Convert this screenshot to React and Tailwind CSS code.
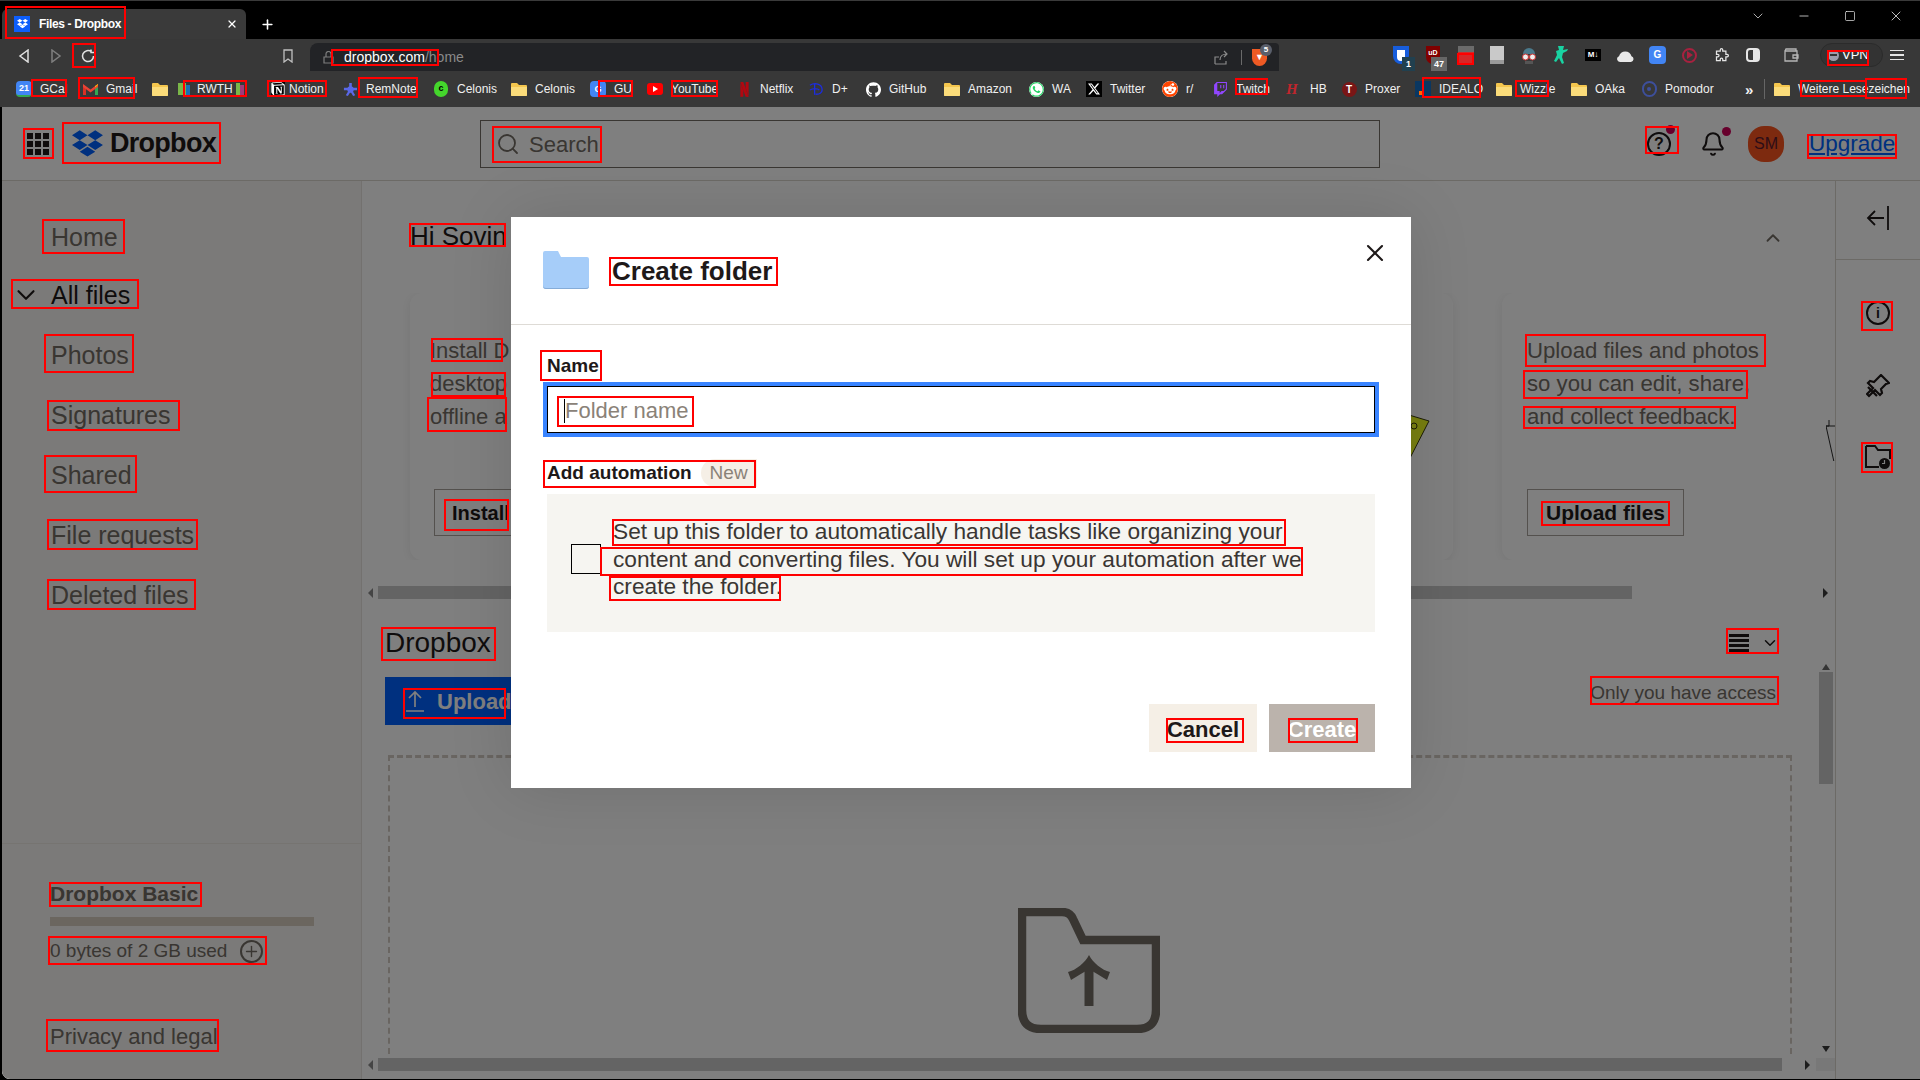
import React from 'react';
import { Bell, ChevronDown, ChevronUp, Minus, Plus, Search, Square, X } from 'lucide-react';
import { SiGithub, SiNetflix, SiNotion, SiReddit, SiTwitch, SiWhatsapp, SiX } from 'react-icons/si';

// Small favicons that no icon set has in the right shape
const Folder = () => (
  <svg width="16" height="14" viewBox="0 0 16 14">
    <path d="M0 2a1 1 0 0 1 1-1h5l2 2h7a1 1 0 0 1 1 1v9a1 1 0 0 1-1 1H1a1 1 0 0 1-1-1z" fill="#f4c64e" />
    <path d="M0 5h16v8a1 1 0 0 1-1 1H1a1 1 0 0 1-1-1z" fill="#fbdc7a" />
  </svg>
);

const DropboxGlyph = ({ size = 34, color = '#0061fe' }) => (
  <svg width={size} height={size * 0.85} viewBox="0 0 235 200" fill={color}>
    <path d="M58.86 75l58.87-37.5L58.86 0 0 37.5z M176.59 75l58.86-37.5L176.59 0l-58.86 37.5z M117.73 112.5L58.86 75 0 112.5 58.86 150z M176.59 150l58.86-37.5L176.59 75l-58.86 37.5z M58.86 162.5l58.87 37.5 58.86-37.5-58.86-37.5z" />
  </svg>
);

const Box = ({ cls, children }) => (
  <div className={`w-4 h-4 flex items-center justify-center text-[9px] font-bold leading-none ${cls}`}>{children}</div>
);

const bookmarks = [
  { w: 'w-[66px]', label: 'GCal', icon: <Box cls="bg-[#4285f4] text-white rounded-sm border-b-2 border-[#34a853]">21</Box> },
  {
    w: 'w-[70px]',
    label: 'Gmail',
    icon: (
      <svg width="15" height="12" viewBox="0 0 15 12">
        <path d="M0 1.5V12h3V4.5z" fill="#d93025" />
        <path d="M15 1.5V12h-3V4.5z" fill="#34a853" />
        <path d="M0 1l7.5 5.6L15 1v3L7.5 9.5 0 4z" fill="#ea4335" />
        <path d="M12 4.5L15 2v-1l-3 2z" fill="#fbbc04" />
      </svg>
    ),
  },
  { w: 'w-[26px]', label: '', icon: <Folder /> },
  {
    w: 'w-[58px]',
    label: 'RWTH',
    tight: true,
    icon: (
      <div className="flex w-4 h-4 items-center">
        <div className="w-2 h-3 bg-[#7ab648]" />
        <div className="w-1 h-3 mt-1 bg-[#1a6fb5]" />
      </div>
    ),
  },
  {
    w: 'w-[34px]',
    label: '',
    icon: (
      <div className="flex w-4 h-4 items-center">
        <div className="w-1 h-3 bg-[#7ab648]" />
        <div className="w-1 h-3 mt-1 bg-[#a03a7a]" />
      </div>
    ),
  },
  { w: 'w-[72px]', label: 'Notion', tight: true, icon: <SiNotion className="text-white bg-black" size={14} /> },
  {
    w: 'w-[91px]',
    label: 'RemNote',
    icon: (
      <svg width="15" height="15" viewBox="0 0 16 16" fill="#5a68e8">
        <circle cx="8" cy="8" r="3.4" />
        <path d="M6.6 1h2.8v5H6.6zM1 6h5v2.8H1zM10 6h5v2.8h-5zM3 14l3-5 2 1.5L5.2 15zM13 14l-3-5-2 1.5 2.800 4.500z" />
      </svg>
    ),
  },
  {
    w: 'w-[78px]',
    label: 'Celonis',
    icon: (
      <div className="w-[14px] h-4 rounded-full bg-[#44d62c] text-black text-[9px] font-bold flex items-center justify-center">c</div>
    ),
  },
  { w: 'w-[79px]', label: 'Celonis', icon: <Folder /> },
  { w: 'w-[57px]', label: 'GU', icon: <Box cls="bg-[#4285f4] text-white rounded-sm">G</Box> },
  {
    w: 'w-[89px]',
    label: 'YouTube',
    icon: (
      <div className="w-4 h-3 rounded-[3px] bg-[#ff0000] flex items-center justify-center">
        <div className="border-l-[5px] border-l-white border-y-[3px] border-y-transparent" />
      </div>
    ),
  },
  { w: 'w-[72px]', label: 'Netflix', icon: <SiNetflix className="text-[#b20710]" size={15} /> },
  {
    w: 'w-[57px]',
    label: 'D+',
    icon: (
      <svg width="15" height="14" viewBox="0 0 16 14" fill="none" stroke="#1c2ce0" strokeWidth="1.4">
        <path d="M1 3c5-3 13-2 13 5 0 3-3 5-7 4.500M6 1v12M1 8c3-2 8-2 10 0" />
      </svg>
    ),
  },
  { w: 'w-[79px]', label: 'GitHub', icon: <SiGithub className="text-white" size={15} /> },
  { w: 'w-[84px]', label: 'Amazon', icon: <Folder /> },
  { w: 'w-[58px]', label: 'WA', icon: <SiWhatsapp className="text-[#25d366] bg-white rounded-full" size={15} /> },
  {
    w: 'w-[76px]',
    label: 'Twitter',
    icon: (
      <div className="w-4 h-4 bg-black flex items-center justify-center">
        <SiX className="text-white" size={12} />
      </div>
    ),
  },
  { w: 'w-[50px]', label: 'r/', icon: <SiReddit className="text-[#ff4500] bg-white rounded-full" size={16} /> },
  {
    w: 'w-[74px]',
    label: 'Twitch',
    icon: <SiTwitch className="text-[#9146ff]" size={15} />,
  },
  { w: 'w-[55px]', label: 'HB', icon: <div className="w-4 text-[#c0262d] italic text-[15px] leading-4 font-bold [font-family:'Liberation_Serif',serif]">H</div> },
  { w: 'w-[74px]', label: 'Proxer', icon: <div className="w-[15px] h-[15px] rounded-full bg-[#7a1616] text-white text-[10px] font-bold flex items-center justify-center">T</div> },
  {
    w: 'w-[81px]',
    label: 'IDEALO',
    icon: (
      <div className="w-4 h-4 bg-[#0a3761] flex items-end pl-[4px] pb-[2px]">
        <div className="w-[4px] h-[4px] bg-[#ff6600]" />
      </div>
    ),
  },
  { w: 'w-[75px]', label: 'Wizzle', icon: <Folder /> },
  { w: 'w-[70px]', label: 'OAka', icon: <Folder /> },
  {
    w: 'w-[104px]',
    label: 'Pomodor',
    icon: (
      <div className="w-[15px] h-4 rounded-full border-2 border-[#3d4f9c] flex items-center justify-center">
        <div className="w-1 h-1 rounded-full bg-[#3d4f9c]" />
      </div>
    ),
  },
];

const annotations = [
  [5, 6, 126, 39], [72, 43, 96, 68], [331, 49, 439, 66], [31, 79, 67, 97], [78, 77, 135, 99], [183, 80, 247, 97],
  [267, 80, 327, 97], [358, 77, 418, 98], [598, 80, 633, 97], [671, 80, 718, 97], [1235, 78, 1268, 95], [1422, 77, 1481, 98],
  [1515, 80, 1549, 97], [1800, 80, 1867, 97], [1865, 78, 1907, 99], [1827, 50, 1869, 66], [1457, 53, 1474, 65],
  [23, 128, 54, 159], [62, 122, 221, 164], [492, 126, 602, 163], [42, 219, 125, 254], [11, 279, 139, 309], [44, 334, 134, 373],
  [47, 400, 180, 431], [44, 455, 137, 493], [47, 519, 198, 550], [47, 579, 196, 610], [409, 223, 506, 247], [431, 338, 503, 362],
  [431, 372, 506, 397], [427, 397, 507, 432], [444, 499, 509, 531], [1645, 126, 1679, 154], [1807, 134, 1897, 159],
  [1861, 301, 1893, 331], [1861, 442, 1893, 473], [1525, 334, 1766, 367], [1523, 370, 1748, 399], [1523, 406, 1736, 429],
  [1541, 501, 1670, 526], [609, 257, 778, 286], [540, 350, 602, 381], [557, 396, 694, 427], [543, 460, 756, 488],
  [612, 519, 1286, 546], [600, 547, 1303, 576], [609, 576, 781, 601], [1166, 718, 1244, 743], [1288, 718, 1358, 743],
  [381, 627, 496, 661], [403, 688, 506, 719], [49, 882, 202, 907], [48, 936, 267, 965], [46, 1019, 219, 1052],
  [1726, 628, 1779, 654], [1590, 676, 1779, 705],
];

const ExtensionIcons = () => (
  <div className="absolute left-[1393px] top-0 h-8 flex items-center">
    <div className="relative w-[33px]">
      <div className="w-4 h-[18px] bg-[#175ddc] rounded-b-lg flex items-center justify-center">
        <div className="w-2 h-[11px] bg-white rounded-b" />
      </div>
      <div className="absolute left-[9px] top-[11px] w-[13px] h-[14px] bg-[#21404f] text-white text-[9px] font-bold text-center leading-[14px]">1</div>
    </div>
    <div className="relative w-[32px]">
      <div className="w-[14px] h-[18px] bg-[#800000] rounded-b-lg text-white text-[7px] font-bold text-center leading-[14px]">uD</div>
      <div className="absolute left-[5px] top-[11px] w-[16px] h-[14px] bg-[#666] text-white text-[9px] font-bold text-center leading-[14px]">47</div>
    </div>
    <div className="w-[32px]">
      <div className="w-4 h-[18px] bg-[#6b6b6b] flex items-end">
        <div className="w-4 h-[12px] bg-[#d62828]" />
      </div>
    </div>
    <div className="w-[31px]">
      <div className="w-[14px] h-[18px] bg-[#c9c9c9] border-b-4 border-[#9a9a9a]" />
    </div>
    <div className="w-[32px]">
      <svg width="16" height="18" viewBox="0 0 16 18">
        <path d="M2 8a6 6 0 0 1 12 0z" fill="#4a7a8c" />
        <circle cx="4.500" cy="11" r="3" fill="#eee" stroke="#c33" />
        <circle cx="11.500" cy="11" r="3" fill="#eee" stroke="#c33" />
        <path d="M4 15h8v3H4z" fill="#555" />
      </svg>
    </div>
    <div className="w-[32px]">
      <svg width="15" height="18" viewBox="0 0 15 18" fill="#19d3a2">
        <path d="M5 0h6l-1 4 5-1-1 2-4 2-1 4 2 6-2 1-3-6-3 4-2-1 3-6-1-4 3-1z" />
      </svg>
    </div>
    <div className="w-[32px]">
      <div className="w-4 h-3 bg-black text-white text-[8px] font-bold text-center leading-3">M↓</div>
    </div>
    <div className="w-[32px]">
      <svg width="17" height="13" viewBox="0 0 17 13" fill="#e8e8e8">
        <path d="M3 13a3 3 0 0 1-1-5.800 6.500 6.500 0 0 1 12.500 0A3 3 0 0 1 14 13z" />
      </svg>
    </div>
    <div className="w-[33px]">
      <div className="w-[17px] h-[18px] bg-[#4285f4] text-white text-[10px] font-bold text-center leading-[18px] rounded-sm">G</div>
    </div>
    <div className="w-[32px]">
      <div className="w-[15px] h-[15px] rounded-full border-2 border-[#a8213f] flex items-center justify-center">
        <div className="border-l-[6px] border-l-[#a8213f] border-y-[4px] border-y-transparent" />
      </div>
    </div>
    <div className="w-[32px]">
      <svg width="15" height="15" viewBox="0 0 24 24" fill="none" stroke="#e6e6e6" strokeWidth="2">
        <path d="M10 3a2 2 0 0 1 4 0v2h5v5h2a2 2 0 0 1 0 4h-2v6h-5v-2a2 2 0 0 0-4 0v2H4v-6h2a2 2 0 0 0 0-4H4V5h6z" />
      </svg>
    </div>
    <div className="w-[38px]">
      <div className="w-[14px] h-[14px] border-2 border-[#e6e6e6] rounded-sm flex justify-end">
        <div className="w-[5px] bg-[#e6e6e6]" />
      </div>
    </div>
    <div className="w-[36px]">
      <svg width="15" height="14" viewBox="0 0 15 14" fill="none" stroke="#b5b5b5" strokeWidth="1.300">
        <path d="M1 3h12v10H1zM1 3l1-2h10v2M9 7h5v3H9z" />
      </svg>
    </div>
    <div className="w-[63px] h-6 rounded-full border border-[#2b2b2b] bg-[#333] flex items-center pl-[7px] gap-[3px] text-white text-[13px]">
      <div className="w-[11px] h-[11px] rounded-full bg-[#9c9caa] flex items-center justify-center">
        <div className="w-[7px] h-[2px] bg-[#333]" />
      </div>
      VPN
    </div>
    <div className="ml-[7px] w-[14px] flex flex-col gap-[3px]">
      <div className="h-[1.500px] bg-[#e6e6e6]" />
      <div className="h-[1.500px] bg-[#e6e6e6]" />
      <div className="h-[1.500px] bg-[#e6e6e6]" />
    </div>
  </div>
);

// Browser chrome: tab strip, address bar, bookmarks
const BrowserChrome = () => (
  <>
    <div className="h-[39px] flex-none flex items-end bg-black border-t border-[#3a3a3a] pl-[2px] relative">
      <div className="w-[244px] h-[30px] bg-[#3a3a3a] rounded-t-md flex items-center pl-[12px] pr-[8px] text-white">
        <div className="w-4 h-4 bg-[#0d5efb] flex items-center justify-center flex-none">
          <DropboxGlyph size={11} color="#ffffff" />
        </div>
        <span className="ml-[9px] text-[12px] font-bold tracking-[-0.35px] flex-1">Files - Dropbox</span>
        <X size={12} strokeWidth={2.5} />
      </div>
      <Plus size={15} strokeWidth={2.5} className="text-white ml-[14px] mb-[7px]" />
      <div className="absolute right-px top-[7px] flex items-center text-[#ececec]">
        <div className="w-[46px] flex justify-center">
          <ChevronDown size={16} strokeWidth={1.1} />
        </div>
        <div className="w-[46px] flex justify-center">
          <Minus size={14} strokeWidth={1.3} />
        </div>
        <div className="w-[46px] flex justify-center">
          <Square size={12} strokeWidth={1.4} />
        </div>
        <div className="w-[46px] flex justify-center">
          <X size={16} strokeWidth={1.2} />
        </div>
      </div>
    </div>

    <div className="h-[32px] flex-none bg-[#383838] flex items-end relative">
      <svg width="12" height="14" viewBox="0 0 12 14" fill="none" stroke="#e0e0e0" strokeWidth="1.500" className="ml-[18px] mb-[8px]">
        <path d="M10 1L2 7l8 6z" />
      </svg>
      <svg width="12" height="14" viewBox="0 0 12 14" fill="none" stroke="#7f7f7f" strokeWidth="1.500" className="ml-[20px] mb-[8px]">
        <path d="M2 1l8 6-8 6z" />
      </svg>
      <svg width="14" height="14" viewBox="0 0 14 14" fill="none" stroke="#e0e0e0" strokeWidth="1.500" className="ml-[19px] mb-[8px]">
        <path d="M12.500 7a5.500 5.500 0 1 1-2-4.200M10 .5v3h3" />
      </svg>
      <svg width="10" height="14" viewBox="0 0 10 14" fill="none" stroke="#c0c0c0" strokeWidth="1.300" className="ml-[188px] mb-[8px]">
        <path d="M1 1h8v12L5 10l-4 3z" />
      </svg>
      <div className="ml-[17px] w-[969px] h-[28px] bg-[#222326] rounded-tl-lg rounded-tr-sm flex items-center pl-[13px] pr-[12px] text-[14px]">
        <svg width="11" height="13" viewBox="0 0 11 13" fill="none" stroke="#7d7d7d" strokeWidth="1.200" className="mr-[10px]">
          <path d="M1 6h9v6H1zM3 6V3a2.500 2.500 0 0 1 5 0v3" />
        </svg>
        <span className="text-white">dropbox.com</span>
        <span className="text-[#8a8a8a]">/home</span>
        <svg width="15" height="15" viewBox="0 0 15 15" fill="none" stroke="#8a8a8a" strokeWidth="1.200" className="ml-auto mr-[12px]">
          <path d="M1 14V7h4M1 14h11v-3M6 10c0-4 3-6 7-6M10 1l3 3-3 3" />
        </svg>
        <div className="w-px h-[15px] bg-[#6a6a6a] mr-[10px]" />
        <div className="relative w-[15px] h-[17px] bg-[#ee5a24] rounded-b-lg text-white text-[9px] font-bold text-center leading-[16px]">
          ▼
          <div className="absolute left-[8px] top-[-5px] w-[12px] h-[12px] rounded-full bg-[#5a5f6b] text-[8px] leading-[12px]">5</div>
        </div>
      </div>
      <ExtensionIcons />
    </div>

    <div className="h-[36px] flex-none bg-[#383838] flex items-center pl-[16px] text-[12px] text-[#f0f0f0]">
      {bookmarks.map((b, i) => (
        <div key={i} className={`flex items-center flex-none ${b.w}`}>
          <div className="w-4 flex items-center justify-center flex-none">{b.icon}</div>
          {b.label && <span className={`whitespace-nowrap ${b.tight ? 'ml-[3px]' : 'ml-2'}`}>{b.label}</span>}
        </div>
      ))}
      <span className="w-[19px] text-[15px] leading-none font-bold">»</span>
      <div className="w-px h-[20px] bg-[#666]" />
      <div className="ml-[9px] w-[24px] flex-none">
        <Folder />
      </div>
      <span className="whitespace-nowrap">Weitere Lesezeichen</span>
    </div>
  </>
);

const sideItems = ['Home', 'All files', 'Photos', 'Signatures', 'Shared', 'File requests', 'Deleted files'];

const Sidebar = () => (
  <aside className="w-[360px] flex-none border-r border-[#e6e3df] bg-[#f7f5f2] flex flex-col text-[#736c64]">
    <nav className="flex-1 pt-[41px] pl-[49px] flex flex-col text-[25px] leading-[30px]">
      {sideItems.map((s) => (
        <div key={s} className={`relative ${s === 'Home' ? 'h-[58px]' : 'h-[60px]'} ${s === 'All files' ? 'text-[#1e1919]' : ''}`}>
          {s === 'All files' && <ChevronDown size={30} strokeWidth={1.7} className="absolute left-[-40px] top-0" />}
          {s}
        </div>
      ))}
    </nav>
    <div className="h-[236px] flex-none border-t border-[#ece8e2] pl-[48px] pt-[36px]">
      <div className="text-[21px] leading-[28px] font-bold">Dropbox Basic</div>
      <div className="w-[264px] h-[9px] bg-[#d6ccbe] mt-[9px]" />
      <div className="flex items-center mt-[11px] text-[19px] leading-[28px]">
        0 bytes of 2 GB used
        <div className="ml-[13px] w-[23px] h-[23px] rounded-full border-2 border-[#736c64] flex items-center justify-center">
          <Plus size={17} strokeWidth={2} />
        </div>
      </div>
      <div className="text-[22px] leading-[30px] mt-[57px]">Privacy and legal</div>
    </div>
  </aside>
);

const ArrowTriangle = ({ cls }) => <div className={`w-0 h-0 border-y-[5px] border-y-transparent ${cls}`} />;

const HorizontalBar = ({ thumbWidth, children }) => (
  <div className="h-[13px] flex items-center bg-white flex-none">
    <div className="w-[16px] flex justify-center">
      <ArrowTriangle cls="border-r-[5px] border-r-[#8a8a8a]" />
    </div>
    <div className={`h-[13px] bg-[#c9c9c9] ${thumbWidth}`} />
    {children}
  </div>
);

const Main = () => (
  <main className="flex-1 min-w-0 flex flex-col bg-white">
    <div className="pt-[40px] pl-[48px] pr-[51px] flex items-center justify-between h-[70px] flex-none text-[#1e1919]">
      <div className="text-[26px] leading-[30px]">Hi Sovin</div>
      <ChevronUp size={22} strokeWidth={2} className="text-[#736c64] mt-[4px]" />
    </div>

    <div className="mt-[42px] pl-[48px] flex gap-[49px] overflow-hidden flex-none h-[267px]">
      <section className="relative w-[1043px] flex-none bg-white rounded-xl shadow-[0_2px_12px_rgba(0,0,0,0.08)] pl-[20px] pt-[41px] overflow-hidden">
        <p className="text-[22px] leading-[33px] text-[#736c64]">
          Install D
          <br />
          desktop
          <br />
          offline a
        </p>
        <button className="mt-[56px] ml-[4px] h-[47px] w-[200px] text-left pl-[17px] border border-[#a8a29c] text-[20px] font-bold text-[#1e1919]">Install</button>
        <svg width="24" height="50" viewBox="0 0 24 50" className="absolute left-[999px] top-[120px]">
          <path d="M0 2l20 6L0 47z" fill="#f0ff20" stroke="#3a3a10" />
          <circle cx="5" cy="13" r="3" fill="none" stroke="#3a3a10" />
        </svg>
      </section>
      <section className="relative w-[600px] flex-none bg-white rounded-xl shadow-[0_2px_12px_rgba(0,0,0,0.08)] pl-[25px] pt-[41px] overflow-hidden">
        <p className="text-[22.200px] leading-[33px] text-[#736c64]">
          Upload files and photos
          <br />
          so you can edit, share,
          <br />
          and collect feedback.
        </p>
        <button className="mt-[56px] h-[47px] w-[157px] border border-[#a8a29c] text-[21px] font-bold text-[#1e1919]">Upload files</button>
        <svg width="14" height="42" viewBox="0 0 14 42" fill="none" stroke="#2a2a2a" className="absolute left-[324px] top-[126px]">
          <path d="M3 1v6H0l8 36M0 7h14" />
        </svg>
      </section>
    </div>

    <div className="mt-[26px]">
      <HorizontalBar thumbWidth="w-[1254px]">
        <div className="ml-auto mr-[7px]">
          <ArrowTriangle cls="border-l-[5px] border-l-[#3a3a3a]" />
        </div>
      </HorizontalBar>
    </div>

    <div className="flex-1 min-h-0 flex">
      <div className="flex-1 min-w-0 pl-[23px] pt-[26px] overflow-hidden">
        <div className="h-[36px] flex items-center justify-between pr-[38px] text-[#1e1919]">
          <div className="text-[28px] leading-[36px]">Dropbox</div>
          <div className="flex items-center gap-[12px]">
            <div className="w-5 flex flex-col gap-[2px]">
              <div className="h-[3px] bg-[#1e1919]" />
              <div className="h-[3px] bg-[#1e1919]" />
              <div className="h-[3px] bg-[#1e1919]" />
              <div className="h-[3px] bg-[#1e1919]" />
            </div>
            <ChevronDown size={18} strokeWidth={2} />
          </div>
        </div>
        <div className="mt-[16px] h-[48px] flex items-center justify-between pr-[41px]">
          <button className="h-[48px] w-[180px] bg-[#0061fe] text-[#fff] flex items-center pl-[20px] gap-[12px] text-[22px] font-bold">
            <svg width="20" height="22" viewBox="0 0 20 22" fill="none" stroke="currentColor" strokeWidth="1.700">
              <path d="M10 17V2M4 8l6-6 6 6M1 21h18" />
            </svg>
            Upload
          </button>
          <div className="text-[19px] text-[#736c64] mb-[16px]">Only you have access</div>
        </div>
        <div className="mt-[30px] ml-[3px] w-[1404px] h-[400px] border-x-2 border-t-[3px] border-dashed border-[#d2cbc3] relative">
          <svg width="142" height="125" viewBox="0 0 142 125" fill="none" stroke="#736c64" strokeWidth="8.500" className="absolute left-[628px] top-[150px]">
            <path d="M4 4h40q8 0 11 7l10 21h73v70q0 19-19 19H23Q4 121 4 102z" />
            <path d="M71 98V55" strokeWidth="9" />
            <path d="M71 47C75 55 84 62 92 64L89 72C82 68 77 64 71 62C65 64 60 68 53 72L50 64C58 62 67 55 71 47z" fill="#736c64" stroke="none" />
          </svg>
        </div>
      </div>
      <div className="w-[17px] flex-none bg-white flex flex-col items-center mt-[63px] mr-px">
        <div className="h-[10px] flex items-center">
          <div className="border-x-[4px] border-x-transparent border-b-[6px] border-b-[#6a6a6a]" />
        </div>
        <div className="w-[14px] h-[112px] bg-[#c9c9c9]" />
        <div className="flex-1" />
        <div className="h-[10px] flex items-center mb-[4px]">
          <div className="border-x-[4px] border-x-transparent border-t-[6px] border-t-[#3a3a3a]" />
        </div>
      </div>
    </div>

    <div className="flex h-[13px] flex-none">
      <HorizontalBar thumbWidth="w-[1404px]" />
      <div className="w-[34px] flex items-center pl-[23px]">
        <ArrowTriangle cls="border-l-[5px] border-l-[#3a3a3a]" />
      </div>
      <div className="flex-1 bg-[#f0f0f0]" />
    </div>
    <div className="h-[8px] flex-none" />
  </main>
);

const Rail = () => (
  <div className="w-[85px] flex-none border-l border-[#d9d4cd] bg-white text-[#1e1919] flex flex-col items-center">
    <div className="h-[79px] w-full border-b border-[#d9d4cd] flex items-center justify-center pb-[4px]">
      <svg width="24" height="24" viewBox="0 0 24 24" fill="none" stroke="currentColor" strokeWidth="1.800">
        <path d="M22 0v24M18 12H2M9 5l-7 7 7 7" />
      </svg>
    </div>
    <div className="mt-[41px] w-[24px] h-[24px] rounded-full border-2 border-current flex items-center justify-center text-[14px] font-bold leading-none">i</div>
    <svg width="24" height="24" viewBox="0 0 24 24" fill="none" stroke="currentColor" strokeWidth="2.200" className="mt-[49px]">
      <path d="M15 1l8 8-3 1-5 5 1 4-2 2-5-5-6 6-2-2 6-6-5-5 2-2 4 1 5-5z" />
      <path d="M2 13l9 9" />
    </svg>
    <svg width="26" height="24" viewBox="0 0 26 24" className="mt-[47px]">
      <path d="M1 1h9l3 4h12v9M25 5M1 1v21h13" fill="none" stroke="currentColor" strokeWidth="2" />
      <circle cx="19.500" cy="18.500" r="5.500" fill="currentColor" />
      <path d="M19.500 15v3.500H17" fill="none" stroke="#fff" strokeWidth="1.200" />
    </svg>
  </div>
);

const PageHeader = () => (
  <header className="h-[74px] flex-none bg-white border-b border-[#d9d4cd] flex items-center text-[#1e1919]">
    <div className="ml-[25px] grid grid-cols-3 gap-[2px] w-[22px] flex-none">
      {Array.from({ length: 9 }).map((_, i) => (
        <div key={i} className="w-[6px] h-[6px] bg-[#1e1919]" />
      ))}
    </div>
    <div className="ml-[23px] w-[144px] flex items-center flex-none">
      <DropboxGlyph size={34} />
      <span className="ml-[7px] text-[27px] font-bold tracking-[-0.7px] leading-none">Dropbox</span>
    </div>
    <div className="ml-[264px] w-[900px] h-[48px] border border-[#736c64] flex items-center pl-[15px] pt-[1px] text-[22px] text-[#736c64] flex-none">
      <Search size={24} strokeWidth={1.8} className="mr-[9px]" />
      Search
    </div>
    <div className="relative ml-[267px] w-[24px] h-[24px] flex-none">
      <div className="w-[24px] h-[24px] rounded-full border-2 border-[#1e1919] text-[16px] font-bold text-center leading-[20px]">?</div>
      <div className="absolute right-[-4px] top-[-7px] w-[9px] h-[9px] rounded-full bg-[#cf0058]" />
    </div>
    <div className="relative ml-[29px] flex-none">
      <Bell size={26} strokeWidth={1.9} />
      <div className="absolute right-[-5px] top-[-4px] w-[9px] h-[9px] rounded-full bg-[#cf0058]" />
    </div>
    <div className="ml-[22px] w-[36px] h-[36px] rounded-[45%] bg-[#fa551e] text-[#5c1a2e] text-[16px] flex items-center justify-center flex-none">SM</div>
    <a className="ml-[25px] text-[22.500px] text-[#0061fe] underline flex-none">Upgrade</a>
  </header>
);

const CreateFolderDialog = () => (
  <div className="absolute inset-0 bg-black/50">
    <div className="absolute left-[509px] top-[110px] w-[900px] h-[571px] bg-white shadow-[0_0_60px_rgba(0,0,0,0.12)] flex flex-col text-[#1e1919]">
      <div className="h-[108px] flex-none border-b border-[#dedbd6] flex items-center pl-[32px] relative">
        <svg width="46" height="38" viewBox="0 0 46 38" className="mt-[-2px]">
          <path d="M0 2a2 2 0 0 1 2-2h13l3 6h26a2 2 0 0 1 2 2v27a3 3 0 0 1-3 3H3a3 3 0 0 1-3-3z" fill="#a6cdf9" />
          <path d="M0 35a3 3 0 0 0 3 3h40a3 3 0 0 0 3-3v-1a3 3 0 0 1-3 3H3a3 3 0 0 1-3-3z" fill="#85acd8" />
        </svg>
        <h2 className="ml-[23px] text-[26px] leading-[34px] font-bold">Create folder</h2>
        <X size={28} strokeWidth={1.8} className="absolute right-[22px] top-[22px]" />
      </div>
      <div className="px-[36px] pt-[29px] flex-1 flex flex-col">
        <label className="text-[19px] leading-[24px] font-bold">Name</label>
        <div className="mt-[8px] h-[47px] border border-black outline-[4px] outline-[#3984ff] flex items-center pl-[16px] pt-[2px] text-[22px] text-[#8a8278]">
          <div className="w-px h-[24px] bg-black" />
          Folder name
        </div>
        <div className="mt-[26px] h-[28px] flex items-center text-[19px]">
          <span className="font-bold">Add automation</span>
          <span className="ml-[9px] h-[28px] leading-[28px] px-[9px] rounded-l-full bg-[#f5efe6] text-[#8a8278]">New</span>
        </div>
        <div className="mt-[7px] h-[138px] bg-[#f6f5f1] pl-[24px] pt-[24px]">
          <div className="flex items-center gap-[12px] text-[22.700px] leading-[27.500px] text-[#3a3633]">
            <div className="w-[30px] h-[30px] border border-black flex-none" />
            <p className="w-[725px]">
              Set up this folder to automatically handle tasks like organizing your content and converting files. You will set up your automation after we create the folder.
            </p>
          </div>
        </div>
        <div className="mt-[72px] flex justify-end gap-[12px] text-[22px] font-bold">
          <button className="w-[108px] h-[48px] bg-[#f5efe6] text-[#1e1919] pt-[3px]">Cancel</button>
          <button className="w-[106px] h-[48px] bg-[#bbb3ac] text-white pt-[3px]">Create</button>
        </div>
      </div>
    </div>
  </div>
);

function App() {
  return (
    <div className="relative w-[1920px] h-[1080px] overflow-hidden bg-black flex flex-col [font-family:'Liberation_Sans',Arial,sans-serif]">
      <BrowserChrome />
      <div className="relative flex-1 min-h-0 ml-[2px] mb-px rounded-bl-lg overflow-hidden bg-white flex flex-col">
        <PageHeader />
        <div className="flex-1 min-h-0 flex">
          <Sidebar />
          <Main />
          <Rail />
        </div>
        <CreateFolderDialog />
      </div>
      {annotations.map(([l, t, r, b], i) => (
        <div
          key={i}
          className="absolute border-2 border-[#ff0000] pointer-events-none"
          style={{ left: l, top: t, width: r - l, height: b - t }}
        />
      ))}
    </div>
  );
}

export default App;
